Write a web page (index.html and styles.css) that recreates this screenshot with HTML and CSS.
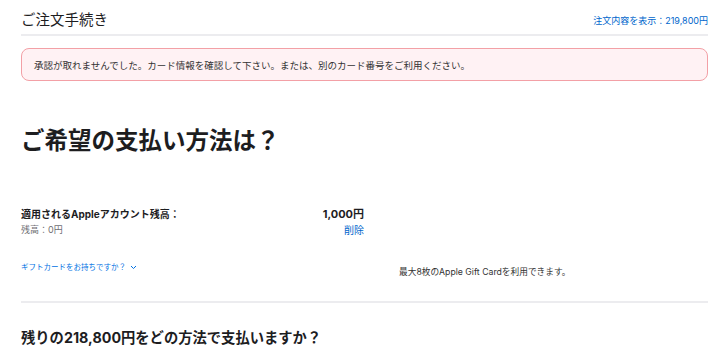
FILE: index.html
```html
<!DOCTYPE html>
<html lang="ja">
<head>
    <meta charset="UTF-8">
    <meta name="viewport" content="width=device-width, initial-scale=1.0">
    <title>ご注文手続き</title>
    <link rel="stylesheet" href="styles.css">
</head>
<body>
    <div class="container">
        <header class="checkout-header">
            <h1>ご注文手続き</h1>
            <a href="#" class="summary-link">注文内容を表示：219,800円</a>
        </header>

        <div class="alert">
            承認が取れませんでした。カード情報を確認して下さい。または、別のカード番号をご利用ください。
        </div>

        <h2 class="page-title">ご希望の支払い方法は？</h2>

        <div class="balance-row">
            <div class="balance-left">
                <div class="balance-label">適用されるAppleアカウント残高：</div>
                <div class="balance-sub">残高：0円</div>
            </div>
            <div class="balance-right">
                <div class="balance-amount">1,000円</div>
                <a href="#" class="remove-link">削除</a>
            </div>
        </div>

        <div class="gift-row">
            <div class="gift-left">
                <a href="#" class="gift-link">ギフトカードをお持ちですか？<svg width="7" height="5" viewBox="0 0 7 5"><path d="M1 1l2.5 2.5L6 1" fill="none" stroke="#0071e3" stroke-width="1"/></svg></a>
            </div>
            <div class="gift-note">最大8枚のApple Gift Cardを利用できます。</div>
        </div>

        <h3 class="remain-title">残りの218,800円をどの方法で支払いますか？</h3>
    </div>
</body>
</html>
```

FILE: styles.css
```css
body {
    font-family: 'Inter', 'Noto Sans CJK JP', sans-serif;
    margin: 0;
    padding: 0;
    background: #fff;
    color: #1d1d1f;
}

a {
    color: #0066cc;
    text-decoration: none;
}

.container {
    margin: 0 11px 0 21px;
}

.checkout-header {
    display: flex;
    justify-content: space-between;
    align-items: center;
    height: 32px;
    border-bottom: 2px solid #ececef;
    padding-top: 2px;
}

.checkout-header h1 {
    font-size: 14.5px;
    font-weight: 400;
    margin: 0;
}

.summary-link {
    font-size: 9px;
    padding-top: 5px;
}

.alert {
    margin-top: 12px;
    height: 31px;
    display: flex;
    align-items: center;
    padding: 0 12px;
    border: 1px solid #f3a0a6;
    border-radius: 8px;
    background: #fff2f4;
    font-size: 9.5px;
    color: #333;
}

.page-title {
    font-size: 23.5px;
    font-weight: 700;
    margin: 44px 0 0;
    line-height: 32px;
}

.balance-row {
    display: flex;
    width: 343px;
    justify-content: space-between;
    margin-top: 50px;
}

.balance-label {
    font-size: 10px;
    font-weight: 700;
    line-height: 14px;
}

.balance-sub {
    font-size: 9px;
    color: #6e6e73;
    margin-top: 2px;
}

.balance-right {
    text-align: right;
}

.balance-amount {
    font-size: 11px;
    font-weight: 700;
    line-height: 14px;
}

.remove-link {
    font-size: 10px;
    display: block;
    margin-top: 1px;
}

.gift-row {
    display: flex;
    align-items: flex-start;
    margin-top: 25px;
    padding-bottom: 23px;
    border-bottom: 2px solid #ececef;
}

.gift-left {
    width: 378px;
    font-size: 7.5px;
    line-height: 12px;
}

.gift-link {
    color: #0071e3;
}

.gift-link svg {
    margin-left: 4px;
    vertical-align: middle;
}

.gift-note {
    font-size: 8.7px;
    line-height: 12px;
    color: #333;
    padding-top: 4px;
}

.remain-title {
    font-size: 14.3px;
    font-weight: 700;
    line-height: 20px;
    margin: 25px 0 0;
}
```
